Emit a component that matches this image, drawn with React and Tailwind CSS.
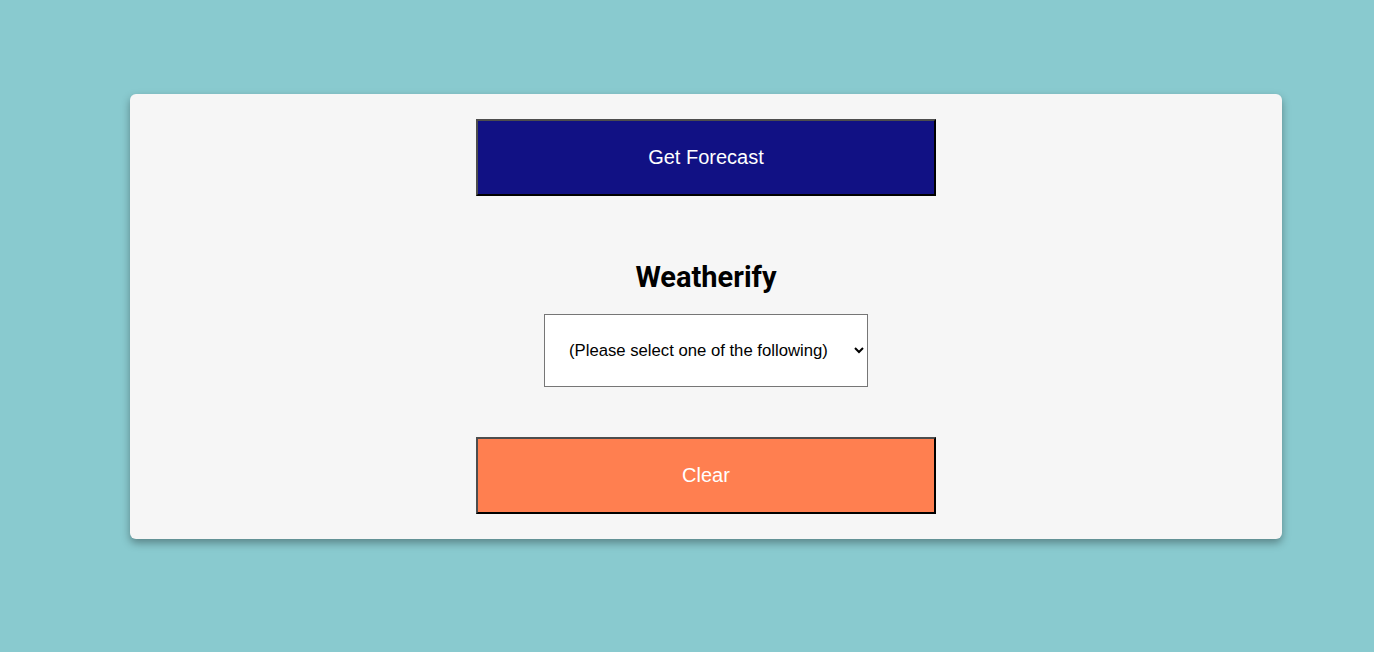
import { useState } from 'react';

function App() {
  const [city, setCity] = useState('');

  return (
    <div className="min-h-screen bg-[#89cacf] pt-[94px] font-['Liberation_Sans',Arial,sans-serif]">
      <div className="ml-[130px] w-[1152px] rounded-[6px] bg-[#f6f6f6] px-6 pt-[25px] pb-[25px] shadow-[0_4px_8px_rgba(0,0,0,0.35)] flex flex-col items-center">
        <button className="w-[460px] h-[77px] pb-[2px] bg-[#111184] text-white text-[20px] border-2 border-t-[#4d4d4d] border-l-[#4d4d4d] border-b-black border-r-black">
          Get Forecast
        </button>

        <h1 className="mt-[64px] text-[29px] leading-[34px] font-bold text-black font-['Roboto','Liberation_Sans',sans-serif]">
          Weatherify
        </h1>

        <select
          value={city}
          onChange={(e) => setCity(e.target.value)}
          className="mt-[20px] w-[324px] h-[73px] bg-white border border-[#767676] pl-5 pr-3 text-[16.7px] text-black"
        >
          <option value="">(Please select one of the following)</option>
          <option value="london">London</option>
          <option value="paris">Paris</option>
          <option value="tokyo">Tokyo</option>
        </select>

        <button className="mt-[50px] w-[460px] h-[77px] pb-[2px] bg-[#ff7f50] text-white text-[20px] border-2 border-t-[#4d4d4d] border-l-[#4d4d4d] border-b-black border-r-black">
          Clear
        </button>
      </div>
    </div>
  );
}

export default App;
